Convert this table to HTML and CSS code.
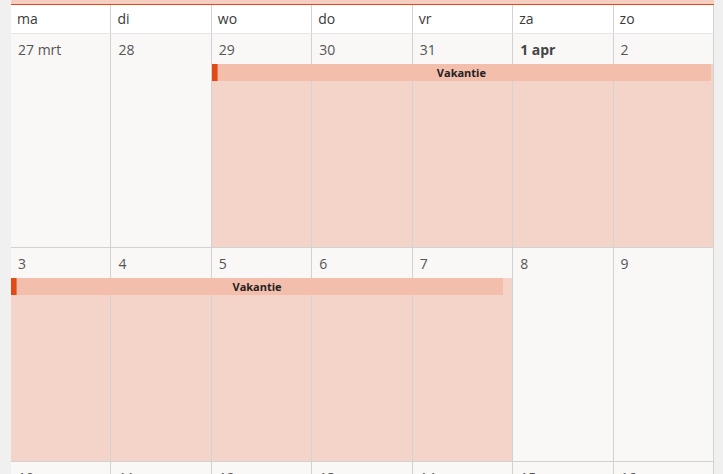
FILE: index.html
```html
<!DOCTYPE html>
<html lang="nl">
<head>
<meta charset="utf-8">
<title>Kalender</title>
<link rel="stylesheet" href="styles.css">
</head>
<body>
<div class="cal">
  <div class="topstrip"></div>
  <div class="head">
    <div class="hcell">ma</div>
    <div class="hcell">di</div>
    <div class="hcell">wo</div>
    <div class="hcell">do</div>
    <div class="hcell">vr</div>
    <div class="hcell">za</div>
    <div class="hcell">zo</div>
  </div>

  <div class="week">
    <div class="cell"><div class="num">27 mrt</div><div class="fill"></div></div>
    <div class="cell"><div class="num">28</div><div class="fill"></div></div>
    <div class="cell"><div class="num">29</div><div class="fill busy"></div></div>
    <div class="cell"><div class="num">30</div><div class="fill busy"></div></div>
    <div class="cell"><div class="num">31</div><div class="fill busy"></div></div>
    <div class="cell"><div class="num today">1 apr</div><div class="fill busy"></div></div>
    <div class="cell"><div class="num">2</div><div class="fill busy"></div></div>
    <div class="event" style="left: 28.571%; width: calc(71.429% - 3px);"><span class="mark"></span><span class="label">Vakantie</span></div>
  </div>

  <div class="week">
    <div class="cell"><div class="num">3</div><div class="fill busy"></div></div>
    <div class="cell"><div class="num">4</div><div class="fill busy"></div></div>
    <div class="cell"><div class="num">5</div><div class="fill busy"></div></div>
    <div class="cell"><div class="num">6</div><div class="fill busy"></div></div>
    <div class="cell"><div class="num">7</div><div class="fill busy"></div></div>
    <div class="cell"><div class="num">8</div><div class="fill"></div></div>
    <div class="cell"><div class="num">9</div><div class="fill"></div></div>
    <div class="event" style="left: 0%; width: calc(71.429% - 10px);"><span class="mark"></span><span class="label">Vakantie</span></div>
  </div>

  <div class="week">
    <div class="cell"><div class="num">10</div><div class="fill"></div></div>
    <div class="cell"><div class="num">11</div><div class="fill"></div></div>
    <div class="cell"><div class="num">12</div><div class="fill"></div></div>
    <div class="cell"><div class="num">13</div><div class="fill"></div></div>
    <div class="cell"><div class="num">14</div><div class="fill"></div></div>
    <div class="cell"><div class="num">15</div><div class="fill"></div></div>
    <div class="cell"><div class="num">16</div><div class="fill"></div></div>
  </div>
</div>
</body>
</html>
```

FILE: styles.css
```css
html, body {
  margin: 0;
  padding: 0;
  background: #f0f0f0;
  height: 100%;
  overflow: hidden;
}

body {
  font-family: "Open Sans", "Noto Sans", sans-serif;
  color: #444;
}

.cal {
  margin-left: 11px;
  width: 703px;
  background: #f9f8f6;
}

.topstrip {
  height: 4px;
  background: #f7cfc0;
  border-bottom: 1px solid #e5471a;
}

.head {
  display: grid;
  grid-template-columns: repeat(7, 1fr);
  background: #ffffff;
  border-bottom: 1px solid #e6e6e6;
  height: 28px;
}

.hcell {
  padding-left: 6px;
  font-size: 14px;
  line-height: 28px;
  color: #3a3a3a;
  border-right: 1px solid #d2d2d2;
}

.week {
  position: relative;
  display: grid;
  grid-template-columns: repeat(7, 1fr);
  height: 213px;
  border-bottom: 1px solid #d2d2d2;
}

.cell {
  display: flex;
  flex-direction: column;
  border-right: 1px solid #d2d2d2;
}

.num {
  height: 30px;
  padding-left: 7px;
  font-size: 14px;
  line-height: 31px;
  color: #555;
}

.num.today {
  font-weight: 700;
  color: #444;
}

.fill {
  flex: 1;
}

.fill.busy {
  background: #f4d4c8;
}

.event {
  position: absolute;
  top: 30px;
  height: 17px;
  display: flex;
  align-items: center;
  background: #f4bead;
}

.mark {
  width: 6px;
  height: 17px;
  background: #df4a16;
  box-shadow: inset -1px 0 0 #ea7a55;
  flex: none;
}

.label {
  flex: 1;
  text-align: center;
  font-size: 11px;
  font-weight: 700;
  color: #222;
  padding-right: 6px;
}
```
